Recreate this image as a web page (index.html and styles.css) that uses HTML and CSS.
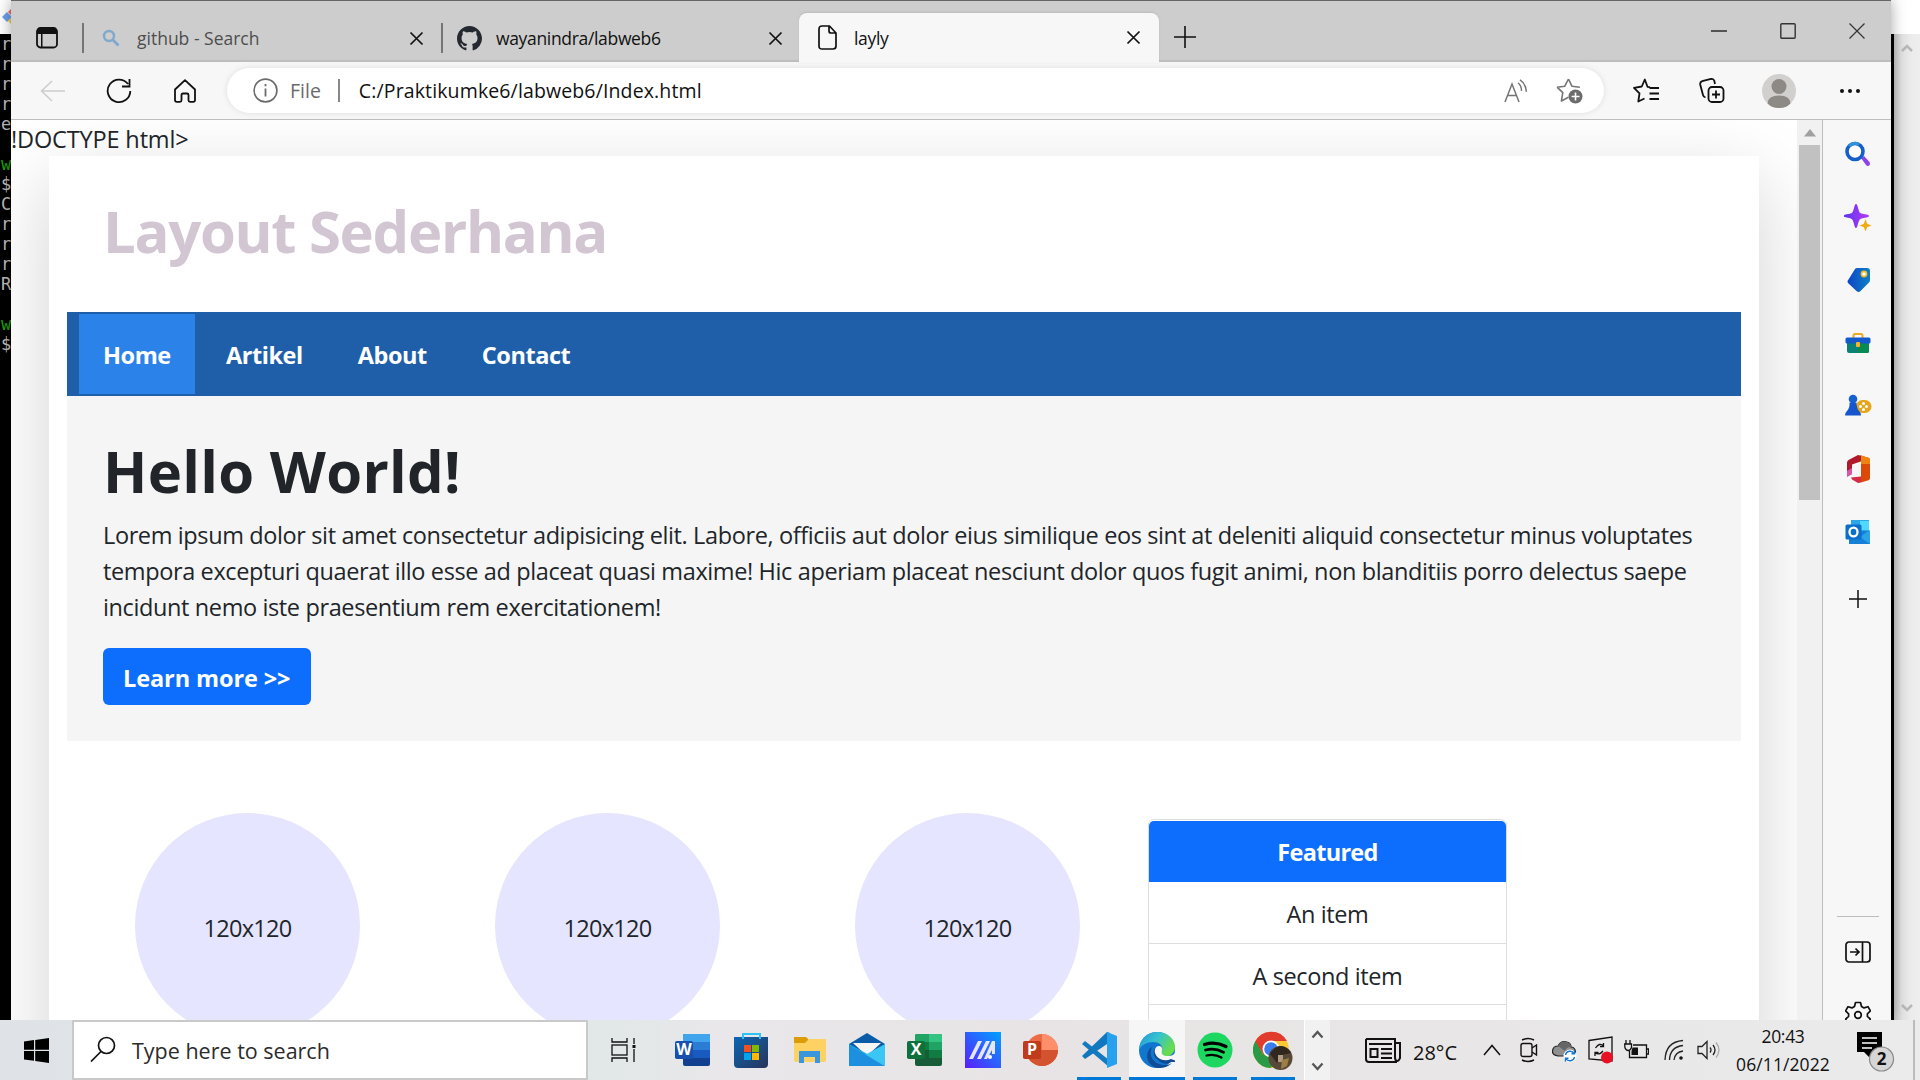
FILE: index.html
```html
<!DOCTYPE html>
<html lang="en">
<head>
<meta charset="utf-8">
<title>layly</title>
<link rel="stylesheet" href="styles.css">
</head>
<body>
<div class="desktop">

  <div class="terminal">
    <div class="term-title">
      <svg width="18" height="18" viewBox="0 0 18 18"><path d="M1 9l5-5 5 5-5 5z" fill="#6ea0ec"/><path d="M7 4l4-4 5 5-4 4z" fill="#ee6a6a"/><path d="M7 13l4-4 5 5-4 4z" fill="#f5cf50"/></svg>
    </div>
    <div class="term-body">
      <pre class="term-text">r
r
r
r
e

<b>w</b>
$
C
r
r
r
R

<b>w</b>
$</pre>
      <div class="term-scroll">
        <svg width="14" height="12" viewBox="0 0 14 12"><path d="M2 9l5-5 5 5" fill="none" stroke="#b8b8b8" stroke-width="2.6"/></svg>
        <svg width="14" height="12" viewBox="0 0 14 12"><path d="M2 3l5 5 5-5" fill="none" stroke="#b8b8b8" stroke-width="2.6"/></svg>
      </div>
    </div>
  </div>

  <div class="browser">
    <div class="titlebar">
      <div class="tab-actions">
        <svg width="22" height="22" viewBox="0 0 22 22"><rect x="1" y="1" width="20" height="19.500" rx="3.500" fill="none" stroke="#111" stroke-width="1.800"/><path d="M1 7V4.500Q1 1 4.500 1h13Q21 1 21 4.500V7zM5 7h1.500v13H5z" fill="#111"/></svg>
      </div>
      <div class="tab">
        <svg width="18" height="18" viewBox="0 0 18 18" fill="none" stroke="#7fa8cc" stroke-width="2.400"><circle cx="7" cy="7" r="5"/><path d="M10.500 10.500l6 6" stroke-width="2.800"/></svg>
        <span class="tab-name muted">github - Search</span>
        <svg class="close" width="15" height="15" viewBox="0 0 15 15"><path d="M1.500 1.500l12 12M13.500 1.500l-12 12" stroke="#111" stroke-width="1.700"/></svg>
      </div>
      <div class="tab tab-github">
        <svg width="25" height="25" viewBox="0 0 16 16"><path fill="#24292f" d="M8 0C3.580 0 0 3.580 0 8c0 3.540 2.290 6.530 5.470 7.590.4.070.55-.17.55-.38 0-.19-.01-.82-.01-1.490-2.010.37-2.530-.49-2.690-.94-.09-.23-.48-.94-.82-1.130-.28-.15-.68-.52-.01-.53.63-.01 1.080.58 1.230.82.72 1.210 1.870.87 2.330.66.07-.52.28-.87.51-1.070-1.780-.2-3.640-.89-3.640-3.950 0-.87.31-1.590.82-2.150-.08-.2-.36-1.020.08-2.120 0 0 .67-.21 2.200.82a7.600 7.600 0 0 1 4 0c1.530-1.040 2.200-.82 2.200-.82.44 1.100.16 1.920.08 2.120.51.56.82 1.270.82 2.150 0 3.070-1.870 3.750-3.650 3.950.29.25.54.73.54 1.480 0 1.070-.01 1.930-.01 2.200 0 .21.150.46.550.38A8 8 0 0 0 16 8c0-4.420-3.580-8-8-8z"/></svg>
        <span class="tab-name">wayanindra/labweb6</span>
        <svg class="close" width="15" height="15" viewBox="0 0 15 15"><path d="M1.500 1.500l12 12M13.500 1.500l-12 12" stroke="#111" stroke-width="1.700"/></svg>
      </div>
      <div class="tab tab-active">
        <svg width="19" height="25" viewBox="0 0 19 25" fill="none" stroke="#111" stroke-width="1.700"><path d="M4 1h7.500L18 8v13q0 3-3 3H4q-3 0-3-3V4q0-3 3-3zM11 1v5q0 2 2 2h5"/></svg>
        <span class="tab-name">layly</span>
        <svg class="close" width="15" height="15" viewBox="0 0 15 15"><path d="M1.500 1.500l12 12M13.500 1.500l-12 12" stroke="#111" stroke-width="1.700"/></svg>
      </div>
      <svg class="new-tab" width="22" height="22" viewBox="0 0 22 22"><path d="M11 0v22M0 11h22" stroke="#111" stroke-width="1.600"/></svg>
      <div class="win-controls">
        <svg width="16" height="16" viewBox="0 0 16 16"><path d="M0 8h16" stroke="#111" stroke-width="1.300"/></svg>
        <svg width="16" height="16" viewBox="0 0 16 16"><rect x=".8" y=".8" width="14.400" height="14.400" rx="1" fill="none" stroke="#333" stroke-width="1.400"/></svg>
        <svg width="16" height="16" viewBox="0 0 16 16"><path d="M.5 .5l15 15M15.500 .5l-15 15" stroke="#333" stroke-width="1.200"/></svg>
      </div>
    </div>

    <div class="toolbar">
      <svg class="ic-back" width="25" height="22" viewBox="0 0 25 22"><path d="M25 11H1.500M12 1L1.500 11 12 21" fill="none" stroke="#cdcdcd" stroke-width="1.600"/></svg>
      <svg class="ic-reload" width="26" height="26" viewBox="0 0 26 26"><path d="M22 6A11.300 11.300 0 1 0 24.300 13M23.500 1v7.500H16" fill="none" stroke="#111" stroke-width="1.800"/></svg>
      <svg class="ic-home" width="24" height="24" viewBox="0 0 24 24"><path d="M2 10.500L12 1.200l10 9.300V21q0 1.800-1.800 1.800H17q-1.500 0-1.500-1.500V16q0-1.500-1.500-1.500h-4q-1.500 0-1.500 1.500v5.300q0 1.500-1.500 1.500H3.800Q2 22.800 2 21z" fill="none" stroke="#111" stroke-width="1.800" stroke-linejoin="round"/></svg>
      <div class="address">
        <svg class="ic-info" width="25" height="25" viewBox="0 0 25 25"><circle cx="12.500" cy="12.500" r="11.400" fill="none" stroke="#6b6b6b" stroke-width="1.600"/><path d="M12.500 10.500v8M12.500 6v2.200" stroke="#6b6b6b" stroke-width="1.800"/></svg>
        <span class="scheme">File</span>
        <span class="sep"></span>
        <span class="url">C:/Praktikumke6/labweb6/Index.html</span>
        <svg class="ic-read" width="24" height="24" viewBox="0 0 24 24" fill="none" stroke="#757575" stroke-width="1.500"><path d="M1 23L8 5l7 18M3.500 16.500h9M14 4q3.500 2.500 3.500 8M16 .8q6 4 6.300 12"/></svg>
        <svg class="ic-star" width="27" height="27" viewBox="0 0 27 27"><path d="M12.500 2l3.400 7.200 8 1M1 10.200l7.800-1L12.500 2M1 10.200l5.800 5.500L5.400 24l7-3.800" fill="none" stroke="#757575" stroke-width="1.600" stroke-linejoin="round"/><circle cx="19.500" cy="19.500" r="7" fill="#6b6b6b"/><path d="M19.500 15.500v8M15.500 19.500h8" stroke="#fff" stroke-width="1.600"/></svg>
      </div>
      <div class="tools">
        <svg width="26" height="25" viewBox="0 0 26 25" fill="none" stroke="#111" stroke-width="1.800" stroke-linejoin="round"><path d="M17 9.200L14.500 8.800 11.800 1.500 8.800 8.500 1 9.800l5.500 5.600L5.300 23.500l6.200-3M16.500 10H26M16.500 15.500H26M16.500 21H26"/></svg>
        <svg width="26" height="26" viewBox="0 0 26 26" fill="none" stroke="#111" stroke-width="1.800"><rect x="9.500" y="9" width="15" height="15" rx="3.500"/><path d="M17 12.500v8M13 16.500h8M6.500 19.500Q4.500 19 4 17L1.200 6.500Q.8 4 3.200 3.200L12 1q2.500-.5 3.300 1.800L16 6"/></svg>
        <svg width="34" height="34" viewBox="0 0 34 34"><circle cx="17" cy="17" r="17" fill="#d2d0ce"/><circle cx="17" cy="12.500" r="7.500" fill="#8d8985"/><path d="M5.500 29.400Q6 21.500 17 21.500t11.500 7.900Q24 34 17 34T5.500 29.400z" fill="#8d8985"/></svg>
        <svg width="20" height="6" viewBox="0 0 20 6" fill="#111"><circle cx="2" cy="3" r="2"/><circle cx="10" cy="3" r="2"/><circle cx="18" cy="3" r="2"/></svg>
      </div>
    </div>

    <div class="window-body">
      <main class="page">
        <div class="stray">!DOCTYPE html&gt;</div>
        <div class="container">
          <header><h1>Layout Sederhana</h1></header>
          <nav><a class="active">Home</a><a>Artikel</a><a>About</a><a>Contact</a></nav>
          <section class="hero">
            <h1>Hello World!</h1>
            <p>Lorem ipsum dolor sit amet consectetur adipisicing elit. Labore, officiis aut dolor eius similique eos sint at deleniti aliquid consectetur minus voluptates<br>tempora excepturi quaerat illo esse ad placeat quasi maxime! Hic aperiam placeat nesciunt dolor quos fugit animi, non blanditiis porro delectus saepe<br>incidunt nemo iste praesentium rem exercitationem!</p>
            <a class="btn">Learn more &gt;&gt;</a>
          </section>
          <section class="features">
            <div class="circle">120x120</div>
            <div class="circle">120x120</div>
            <div class="circle">120x120</div>
            <div class="card">
              <div class="card-header">Featured</div>
              <div class="card-item">An item</div>
              <div class="card-item">A second item</div>
            </div>
          </section>
        </div>
      </main>
      <div class="scrollbar">
        <svg width="12" height="8" viewBox="0 0 12 8"><path d="M0 7.500L6 0l6 7.500z" fill="#a0a0a0"/></svg>
        <div class="thumb"></div>
      </div>
      <aside class="sidebar">
        <svg width="28" height="28" viewBox="0 0 28 28"><path d="M17 18l3-2 5.500 6q1.500 3-1.500 4-1 .3-2-1z" fill="#8b44e8"/><circle cx="11" cy="11.500" r="8" fill="#fff" stroke="#1560c8" stroke-width="3.600"/><path d="M5 6a8 8 0 0 1 10-1.500" fill="none" stroke="#2f93dc" stroke-width="3"/></svg>
        <svg width="28" height="28" viewBox="0 0 28 28"><defs><linearGradient id="sp"><stop offset="0" stop-color="#5a35ee"/><stop offset="1" stop-color="#b83af5"/></linearGradient></defs><path d="M12 1c1.800 0 2.300 7 4 8.800S25 11 25 13s-7 1.400-9 3.200S13.800 25 12 25s-2-7-4-8.800S-.5 15-.5 13 6 11.600 8 9.800 10.200 1 12 1z" fill="url(#sp)"/><path d="M21.500 16l1.700 4.800 4.300 1.700-4.300 1.700-1.700 4.300-1.700-4.300-4.300-1.700 4.300-1.700z" fill="#efae16"/></svg>
        <svg width="28" height="28" viewBox="0 0 28 28"><defs><linearGradient id="tg"><stop offset="0" stop-color="#0a46c8"/><stop offset="1" stop-color="#0f80c4"/></linearGradient></defs><path d="M13 2h10q3 0 3 3v9q0 1.500-1 2.500l-8.500 8.500q-2 2-4 0l-8-7.500q-2-2 0-4L11 3q1-1 2-1z" fill="url(#tg)"/><circle cx="20" cy="8" r="2.600" fill="#fff" stroke="#f2bd2c" stroke-width="1.600"/></svg>
        <svg width="28" height="28" viewBox="0 0 28 28"><path d="M9.500 9V6.500q0-1.500 1.500-1.500h6q1.500 0 1.500 1.500V9" fill="none" stroke="#eeaa25" stroke-width="2"/><path d="M3 13h22v9q0 2-2 2H5q-2 0-2-2z" fill="#0b8273"/><path d="M14 13h11v9q0 2-2 2h-9z" fill="#098a52"/><rect x="1.500" y="8.500" width="25" height="6" rx="1.500" fill="#1459cc"/><rect x="12" y="13" width="4" height="5" rx="1" fill="#f4b52a"/></svg>
        <svg width="28" height="28" viewBox="0 0 28 28"><rect x="12" y="8" width="15.500" height="13" rx="6.500" fill="#e7a51c"/><circle cx="9" cy="7" r="4.300" fill="#1760cf"/><path d="M5.500 10.500h7q0 6 3 9 1.500 1 1.500 4H1q0-3 2-4.500 3-3 2.500-8.500z" fill="#1656cc"/><g fill="#fff"><circle cx="19.500" cy="11.500" r="1.500"/><circle cx="19.500" cy="17.500" r="1.500"/><circle cx="16.500" cy="14.500" r="1.500"/><circle cx="22.500" cy="14.500" r="1.500"/></g></svg>
        <svg width="28" height="28" viewBox="0 1 28 28"><path d="M14 1L18 2v5L8 10.500V20l-5 2.500V8.500Q3 7 4.500 6z" fill="#b01a2b"/><path d="M3 17l5-3v6l-5 3z" fill="#d656a8"/><path d="M14 1l3 .5 7.500 2.200Q26 4.200 26 6v18q0 1.800-1.500 2.300L17 28.500V2z" fill="#dc4a0a"/><path d="M17 1.500l7.500 2.200Q26 4.200 26 6v4h-9z" fill="#ee8512"/><path d="M7 23.500l10-1v6L14 29l-6-3.500z" fill="#d42c48"/></svg>
        <svg width="28" height="28" viewBox="0 0 28 28"><rect x="7" y="2" width="18" height="15" fill="#2ba7ea"/><path d="M16 3h9v9h-9z" fill="#50d9ff"/><path d="M5 13l21 0v13H5z" fill="#1580d6"/><path d="M16 19l10-7v14z" fill="#2ba3e8"/><rect x="1.500" y="6.500" width="16" height="15" rx="1.500" fill="#0a6ecb"/><ellipse cx="9.500" cy="14" rx="4" ry="4.400" fill="none" stroke="#fff" stroke-width="2.300"/></svg>
        <svg class="add" width="18" height="18" viewBox="0 0 18 18"><path d="M9 0v18M0 9h18" stroke="#111" stroke-width="1.500"/></svg>
        <hr>
        <svg class="panel" width="26" height="22" viewBox="0 0 26 22" fill="none" stroke="#111" stroke-width="1.700"><rect x="1" y="1" width="24" height="20" rx="3"/><path d="M17.500 1v20M5 11h9M10.500 7.500L14 11l-3.500 3.500"/></svg>
        <svg class="gear" width="26" height="26" viewBox="0 0 26 26" fill="none" stroke="#111" stroke-width="1.700" stroke-linejoin="round"><path d="M10.500 1.500h5l1 4 2.500 1.400 4-1.200 2.400 4.200-3 2.900v2.600l3 2.800-2.400 4.200-4-1.100-2.500 1.400-1 4h-5l-1-4L7 21.300l-4 1.100-2.400-4.200 3-2.800v-2.600l-3-2.900L3 5.700l4 1.200 2.500-1.400z"/><circle cx="13" cy="14" r="3.300"/></svg>
      </aside>
    </div>
  </div>

  <div class="taskbar">
    <div class="start"><svg width="25" height="25" viewBox="0 0 25 25"><path d="M0 3.500l10-1.400v9.700H0zM11.200 1.900L25 0v11.800H11.200zM0 13h10v9.800L0 21.400zM11.200 13H25v12l-13.800-2z"/></svg></div>
    <div class="search">
      <svg width="26" height="26" viewBox="0 0 26 26" fill="none" stroke="#111" stroke-width="1.700"><circle cx="16.500" cy="9.500" r="8"/><path d="M11 15.500L1 25.500"/></svg>
      <span>Type here to search</span>
    </div>
    <div class="task-view"><svg width="26" height="24" viewBox="0 0 26 24" fill="none" stroke="#111" stroke-width="1.300"><path d="M1 0v4h15V0M1 24v-4h15v4M23 0v6M23 11v13"/><rect x="1" y="7" width="15" height="10"/><path d="M21.500 7h3v3h-3z" fill="#111" stroke="none"/></svg></div>
    <div class="apps">
      <div class="app"><svg width="36" height="36" viewBox="0 0 36 36"><rect x="8" y="2" width="27" height="32" rx="2" fill="#123f8f"/><path d="M8 4q0-2 2-2h23q2 0 2 2v6H8z" fill="#41a5ee"/><path d="M8 10h27v8H8z" fill="#2b7cd3"/><path d="M8 18h27v8H8z" fill="#185abd"/><rect y="9" width="18" height="18" rx="1.800" fill="#1750ae"/><text x="9" y="23" class="letter">W</text></svg></div>
      <div class="app"><svg width="36" height="36" viewBox="0 0 36 36"><defs><linearGradient id="ms" x1="0" y1="0" x2="1" y2="1"><stop offset="0" stop-color="#0d66b4"/><stop offset="1" stop-color="#27355a"/></linearGradient></defs><path d="M1 5h34v27q0 4-4 4H5q-4 0-4-4z" fill="url(#ms)"/><path d="M10 7V2h17v5" fill="none" stroke="#2cc4f5" stroke-width="2"/><path d="M11 13h7v7h-7z" fill="#f25022"/><path d="M19 13h7v7h-7z" fill="#7fba00"/><path d="M11 21h7v7h-7z" fill="#00a4ef"/><path d="M19 21h7v7h-7z" fill="#ffb900"/></svg></div>
      <div class="app"><svg width="36" height="36" viewBox="0 0 36 36"><path d="M3 5h12l3 3v4H3z" fill="#dc9c05"/><path d="M3 11h11l4-4h17v21q0 2-2 2H5q-2 0-2-2z" fill="#fdd162"/><path d="M8 31V19h21v12h-5v-6H13v6z" fill="#3a96dd"/></svg></div>
      <div class="app"><svg width="36" height="36" viewBox="0 0 36 36"><path d="M0 12L18 1l18 11v8H0z" fill="#0a5ba8"/><path d="M4 11h28L18 24z" fill="#f5f5f5"/><path d="M0 12l22 12-8 10H0z" fill="#2aa6e4"/><path d="M36 12L16 23l20 11z" fill="#3cc6f4"/><path d="M0 34V13l36 21z" fill="#1c90de"/></svg></div>
      <div class="app"><svg width="36" height="36" viewBox="0 0 36 36"><rect x="8" y="2" width="27" height="32" rx="2" fill="#185c37"/><path d="M8 4q0-2 2-2h12v8H8z" fill="#21a366"/><path d="M22 2h11q2 0 2 2v6H22z" fill="#33c481"/><path d="M8 10h14v8H8z" fill="#107c41"/><path d="M22 10h13v8H22z" fill="#21a366"/><path d="M22 18h13v8H22z" fill="#107c41"/><rect y="9" width="18" height="18" rx="1.800" fill="#0f703b"/><text x="9" y="23" class="letter">X</text></svg></div>
      <div class="app"><svg width="36" height="36" viewBox="0 0 36 36"><defs><linearGradient id="as" x1="0" y1="1" x2="1" y2="0"><stop offset="0" stop-color="#5a1cff"/><stop offset="1" stop-color="#00a2ff"/></linearGradient></defs><path d="M0 0h36v36H0z" fill="url(#as)"/><path d="M4 27L13 9h4L8 27zM12 27l9-18h4l-9 18zM19 27l8-18h3v13h-3v-4l-5 9z" fill="#e6e6ff"/><circle cx="25" cy="25" r="2" fill="#fff"/></svg></div>
      <div class="app"><svg width="36" height="36" viewBox="0 0 36 36"><circle cx="19" cy="18" r="16" fill="#ed6c47"/><path d="M19 2a16 16 0 0 1 16 16H19z" fill="#ff8f6b"/><path d="M3 18h32a16 16 0 0 1-32 0z" fill="#d35230"/><rect y="9" width="18" height="18" rx="1.800" fill="#c03b1c"/><text x="9" y="23" class="letter">P</text></svg></div>
      <div class="app open"><svg width="36" height="36" viewBox="0 0 36 36"><path d="M1 12l3-3 24 19v7z" fill="#1479c0"/><path d="M1 24l25-24 3 1v9L4 27z" fill="#1177bf"/><path d="M26 0l10 4v28l-10 4z" fill="#27a0ee"/></svg></div>
      <div class="app open current"><svg width="36" height="36" viewBox="0 0 36 36"><defs><linearGradient id="eg" x1="0" y1="0" x2="1" y2=".5"><stop offset="0" stop-color="#2194dc"/><stop offset=".5" stop-color="#35c2cf"/><stop offset="1" stop-color="#69dc4c"/></linearGradient></defs><circle cx="18" cy="18" r="18" fill="#1176ce"/><path d="M0 18C1 6 9 0 18 0c12 0 18 8 18 15 0 6-5 10-10 9-5-1-5-3-3-6 1-5-3-8-9-8C8 10 2 13 0 18z" fill="url(#eg)"/><path d="M13 15c-4 9 2 18 13 18 3 0 5-1 7-2-4 4-8 5-14 5C7 34 5 20 13 15z" fill="#104c96"/><path d="M20 14c-3 2-4 5-3 8 2 5 9 7 16 3l3 0v5l-4 0c-3 3-10 2-13-2-6-4-6-12 1-14z" fill="#104c96"/><path d="M20 14c5 0 2 6 3 8s7 3 11 1l3-3v9l-5-2c-7 3-14 0-16-6-1-4 1-7 4-7z" fill="#f6f6f6"/></svg></div>
      <div class="app open"><svg width="36" height="36" viewBox="0 0 36 36"><circle cx="18" cy="18" r="17.500" fill="#1ed760"/><g fill="none" stroke="#000" stroke-linecap="round"><path d="M7.500 12.500q11-3.500 21.500 2" stroke-width="3.300"/><path d="M8.500 18q9.500-2.500 18 2.200" stroke-width="2.800"/><path d="M9.500 23.500q8-2 15 2" stroke-width="2.300"/></g></svg></div>
      <div class="app open"><svg width="40" height="40" viewBox="0 0 40 40"><circle cx="18" cy="20" r="18" fill="#fcc934"/><path d="M2 12a18 18 0 0 1 32-1H18l-7 14z" fill="#e13b2d"/><path d="M2.400 11A18 18 0 0 0 18 38l7-14-7 4-8-4z" fill="#2b9a47"/><circle cx="18" cy="19" r="8.500" fill="#fff"/><circle cx="18" cy="19" r="6.800" fill="#3b7ded"/><circle cx="27.500" cy="28" r="12" fill="#574838"/><path d="M17 24q8-13 18-5l3 4-9 2-5 8z" fill="#30281f"/><path d="M25 25h5v7h-5z" fill="#b09a80"/><path d="M29 30l7-2-2 8-6 3z" fill="#9c7f42"/></svg></div>
    </div>
    <div class="band-scroll">
      <svg width="13" height="10" viewBox="0 0 13 10"><path d="M1.500 8.500l5-5.500 5 5.500" fill="none" stroke="#555" stroke-width="2.300"/></svg>
      <svg width="13" height="10" viewBox="0 0 13 10"><path d="M1.500 1.500l5 5.500 5-5.500" fill="none" stroke="#555" stroke-width="2.300"/></svg>
    </div>
    <div class="tray">
      <svg class="t-news" width="36" height="25" viewBox="0 0 36 25" fill="none" stroke="#111" stroke-width="2"><path d="M1 1h29v18q0 4 2 4t3-3V5h-5M1 1v20q0 3 3 3h28"/><path d="M4 6h23M16 11h11M16 15.500h11M16 20h11" stroke-width="1.800"/><rect x="5.500" y="11" width="7" height="8"/></svg>
      <span class="t-temp">28°C</span>
      <svg class="t-up" width="18" height="12" viewBox="0 0 18 12"><path d="M1 11l8-9.500 8 9.500" fill="none" stroke="#111" stroke-width="1.500"/></svg>
      <svg class="t-meet" width="18" height="26" viewBox="0 0 18 26" fill="none" stroke="#111" stroke-width="1.400"><rect x="1" y="6.500" width="11" height="13" rx="2"/><path d="M12 11l4.500-3v10L12 15M2 3q6-3 12 0M2 23q6 3 12 0"/></svg>
      <svg class="t-cloud" width="25" height="26" viewBox="0 0 25 26"><path d="M6 19q-6-1-5.500-5Q1 9 6 9q3-6 9-4 4 1 4 5 4 0 4.500 5-1 4-5 4z" fill="#909090" stroke="#222" stroke-width="1.200"/><path d="M6 9q3-6 9-4 4 1 4 5-5 0-6 4z" fill="#666"/><circle cx="18" cy="19" r="6.500" fill="#fff"/><path d="M13.500 18a4.600 4.600 0 0 1 8.500-1.500M22.500 20a4.600 4.600 0 0 1-8.500 1.500M22.500 13.500v3.200h-3M13.500 24.500v-3.200h3" fill="none" stroke="#0f77cf" stroke-width="1.400"/></svg>
      <svg class="t-update" width="26" height="28" viewBox="0 0 26 28" fill="none" stroke="#111" stroke-width="1.300"><path d="M1 4.500L24 1v24L1 23z"/><path d="M7.500 12q4-6 8-2M15.500 7v3.500H12M15 15q-4 5-8 1.500M7 20v-3.500h3.500"/><circle cx="19" cy="21.500" r="6" fill="#e81123" stroke="none"/></svg>
      <svg class="t-battery" width="25" height="20" viewBox="0 0 25 20" fill="none" stroke="#111" stroke-width="1.300"><path d="M9 5h13.500v12.500H5.500V11M23 9h1.500v5H23M2 0v4M6 0v4M.7 4h6.800v3.500q-1 3-3.300 3t-3.300-3z"/><path d="M8.500 7.500H14V15H7.500v-4z" fill="#111" stroke="none"/></svg>
      <svg class="t-wifi" width="20" height="22" viewBox="0 0 20 22" fill="none" stroke="#222" stroke-width="1.300"><path d="M1 21Q1.500 3 19 1.500M5.500 21Q6 8 19 6.500M10 21q1-8 9-9"/><circle cx="17" cy="19" r="1.800" fill="#111" stroke="none"/></svg>
      <svg class="t-sound" width="24" height="20" viewBox="0 0 24 20" fill="none" stroke="#222" stroke-width="1.300"><path d="M1 6.500h4L10 1.500v17L5 13.500H1zM13 7.500q2 2.500 0 5M16 5q4 5 0 10"/><path d="M19 2.500q6 7.500 0 15" stroke="#aaa"/></svg>
      <div class="clock"><span class="time">20:43</span><span class="date">06/11/2022</span></div>
      <div class="notify">
        <svg width="38" height="44" viewBox="0 0 38 44"><path d="M0 1h25v20H14v7l-7-7H0z" fill="#000"/><path d="M5 7h15M5 12h15M5 17h10" stroke="#fff" stroke-width="1.700"/><circle cx="24.500" cy="28" r="12" fill="#d6d6d6" stroke="#8a8a8a" stroke-width="1.200"/><text x="24.500" y="34" class="badge">2</text></svg>
      </div>
      <div class="peek"></div>
    </div>
  </div>
</div>
</body>
</html>
```

FILE: styles.css
```css
* { box-sizing: border-box; }

body {
  margin: 0;
  font-family: "Open Sans", "Noto Sans", sans-serif;
  color: #212529;
}

svg { display: block; flex: none; }

.desktop {
  position: relative;
  width: 1920px;
  height: 1080px;
  overflow: hidden;
  background: #000;
}

/* Terminal behind the browser */
.terminal {
  position: absolute;
  inset: 0 0 60px 0;
  display: flex;
  flex-direction: column;
}
.term-title {
  height: 34px;
  padding: 8px 0 0 1px;
  background: #fff;
}
.term-body {
  flex: 1;
  display: flex;
  justify-content: space-between;
  background: #000;
}
.term-text {
  margin: 0 0 0 1px;
  font: 17px/20px "DejaVu Sans Mono", monospace;
  color: #bfbfbf;
}
.term-text b { font-weight: 400; color: #1ca800; }
.term-scroll {
  width: 26px;
  display: flex;
  flex-direction: column;
  justify-content: space-between;
  align-items: center;
  padding: 8px 0 6px;
  background: linear-gradient(90deg, #c8c8c8, #e2e2e2 8px, #ececec 18px, #eee);
}

/* Browser window */
.browser {
  position: absolute;
  left: 11px;
  top: 0;
  width: 1880px;
  height: 1020px;
  display: flex;
  flex-direction: column;
  background: #f7f7f7;
  box-shadow: 0 0 14px rgba(0, 0, 0, .35);
}
.titlebar {
  height: 62px;
  flex: none;
  display: flex;
  align-items: flex-start;
  background: #cdcdcd;
  border-top: 1px solid #666;
  box-shadow: inset 0 -2px 1px #bdbdbd;
}
.tab-actions { width: 71px; padding: 26px 0 0 25px; }
.tab {
  width: 359px;
  height: 30px;
  margin-top: 22px;
  padding: 0 17px 0 18px;
  display: flex;
  align-items: center;
  gap: 17px;
  border-left: 2px solid #757575;
  font-size: 17.500px;
}
.tab-github { width: 358px; padding: 0 16px 0 14px; gap: 14px; }
.tab-active {
  width: 360px;
  height: 50px;
  margin-top: 12px;
  padding: 0 18px 1px 19px;
  gap: 17px;
  border: 0;
  border-radius: 8px 8px 0 0;
  background: #f7f7f7;
  box-shadow: 0 -1px 2px #bbb;
}
.tab-name { letter-spacing: -.33px; color: #111; }
.tab-name.muted { letter-spacing: 0; color: #4d4d4d; }
.close { margin-left: auto; }
.new-tab { margin: 25px 0 0 15px; }
.win-controls {
  display: flex;
  gap: 53px;
  margin: 22px 26px 0 auto;
}

.toolbar {
  height: 58px;
  flex: none;
  display: flex;
  align-items: center;
  border-bottom: 1px solid #bdbdbd;
}
.ic-back { margin-left: 29px; }
.ic-reload { margin-left: 41px; }
.ic-home { margin-left: 41px; }
.address {
  width: 1377px;
  height: 45px;
  margin-left: 30px;
  padding: 0 21px 0 26px;
  display: flex;
  align-items: center;
  border-radius: 23px;
  background: #fff;
  box-shadow: 0 0 6px rgba(0, 0, 0, .1);
  font-size: 19.500px;
}
.scheme { margin-left: 12px; color: #6b6b6b; }
.sep { width: 2px; height: 23px; margin-left: 17px; background: #888; }
.url { margin-left: 19px; letter-spacing: .13px; color: #111; }
.ic-read { margin-left: auto; }
.ic-star { margin-left: 28px; }
.tools {
  flex: 1;
  display: flex;
  align-items: center;
  justify-content: space-between;
  padding: 0 31px 0 29px;
}
.tools svg:nth-child(3) { margin: 0 4px 0 -2px; }

.window-body { flex: 1; min-height: 0; display: flex; }

/* Page shown in the viewport */
.page {
  width: 1786px;
  overflow: hidden;
  background: #fff;
  font-size: 23.500px;
  line-height: 36px;
  letter-spacing: -.38px;
}
.stray { height: 36px; padding-top: 1px; letter-spacing: -.15px; }
.container {
  width: 1710px;
  height: 1200px;
  margin-left: 38px;
  padding: 0 18px;
  background: #fff;
  box-shadow: 0 24px 72px rgba(0, 0, 0, .175);
}
.page h1 {
  margin: 0;
  font-size: 58px;
  line-height: 72px;
  font-weight: 700;
}
header { height: 156px; padding: 39px 36px 0; }
header h1 { color: #d3c6d3; letter-spacing: -1.300px; }
nav {
  height: 84px;
  padding: 2px 12px;
  display: flex;
  gap: 7px;
  background: #1f5faa;
  color: #fff;
  font-weight: 700;
  letter-spacing: -.45px;
}
nav a { padding: 23px 24px 21px; }
nav .active { width: 116px; background: #2b83ea; }
.hero {
  height: 345px;
  padding: 39px 36px 0;
  background: #f5f5f5;
}
.hero h1 { letter-spacing: .3px; }
.hero p { margin: 10px 0 23px; white-space: nowrap; }
.btn {
  display: block;
  width: 208px;
  height: 57px;
  padding: 12px 0 0 20px;
  border-radius: 6px;
  background: #0d6efd;
  color: #fff;
  font-weight: 700;
  letter-spacing: -.1px;
}
.features { display: flex; padding: 72px 0 0 68px; }
.circle {
  width: 225px;
  height: 225px;
  margin-right: 135px;
  padding-top: 1px;
  border-radius: 50%;
  background: #e5e5ff;
  line-height: 228px;
  text-align: center;
  letter-spacing: -.7px;
}
.card {
  width: 359px;
  height: 310px;
  margin: 6px 0 0 -67px;
  border: 1px solid #dedede;
  border-radius: 6px;
  text-align: center;
}
.card-header {
  height: 61px;
  margin-top: 1px;
  padding-top: 13px;
  border-radius: 5px 5px 0 0;
  background: #0d6efd;
  color: #fff;
  font-weight: 700;
  letter-spacing: -.7px;
}
.card-item {
  height: 61.500px;
  padding-top: 14px;
  border-bottom: 1.500px solid #dedede;
}

.scrollbar {
  width: 25px;
  padding-top: 9px;
  display: flex;
  flex-direction: column;
  align-items: center;
  background: #f1f1f1;
}
.thumb { width: 21px; height: 355px; margin-top: 8px; background: #c1c1c1; }

.sidebar {
  flex: 1;
  overflow: hidden;
  display: flex;
  flex-direction: column;
  align-items: center;
  gap: 35px;
  padding: 20px 0 0 1px;
  border-left: 1px solid #bdbdbd;
}
.sidebar .add { margin-top: 9px; }
.sidebar hr {
  width: 42px;
  height: 1px;
  margin: 273px 0 -11px;
  border: 0;
  background: #bdbdbd;
  flex: none;
}
.sidebar .gear { margin-top: 3px; }

/* Taskbar */
.taskbar {
  position: absolute;
  left: 0;
  right: 0;
  bottom: 0;
  height: 60px;
  display: flex;
  background: linear-gradient(90deg, #dfe3e8 0, #e2e8e7 620px, #e9e7ea 720px, #e8e4e5 1050px, #e8e6e6 1450px, #ebebeb 1920px);
}
.start { width: 72px; padding: 18px 0 0 24px; }
.search {
  width: 516px;
  padding: 1px 0 0 16px;
  display: flex;
  align-items: center;
  gap: 16px;
  border: 2px solid #c9c9c9;
  background: #fff;
  font-size: 21.500px;
  color: #2b2b2b;
}
.search svg { margin-top: -3px; }
.task-view { width: 76px; padding: 18px 0 0 23px; }
.apps { display: flex; }
.app {
  width: 58px;
  display: flex;
  justify-content: center;
  align-items: center;
  border-bottom: 3px solid transparent;
  padding-top: 3px;
}
.app.open {
  width: 44px;
  margin: 0 7px;
  border-bottom-color: #0078d7;
}
.app.current { width: 56px; margin: 0 1px; background: #f6f6f6; }
.letter, .badge {
  font: 700 16px "Open Sans", sans-serif;
  text-anchor: middle;
  fill: #fff;
}
.badge { font-size: 17px; fill: #111; }
.band-scroll {
  width: 26px;
  display: flex;
  flex-direction: column;
  justify-content: space-between;
  align-items: center;
  padding: 9px 0 8px;
  margin-left: 2px;
  background: #f1f1f1;
  border-left: 1px solid #fff;
}
.tray { flex: 1; display: flex; align-items: center; color: #111; }
.t-news { margin-left: 35px; }
.t-temp { width: 46px; margin: 4px 0 0 12px; font-size: 20px; }
.t-up { margin-left: 24px; }
.t-meet { margin-left: 19px; }
.t-cloud { margin-left: 14px; }
.t-update { margin-left: 11px; }
.t-battery { margin-left: 10px; }
.t-wifi { margin-left: 15px; }
.t-sound { margin-left: 13px; }
.clock {
  width: 96px;
  margin-left: 14px;
  display: flex;
  flex-direction: column;
  align-items: center;
  font-size: 17.500px;
  line-height: 28px;
}
.time { letter-spacing: -.3px; }
.date { letter-spacing: .1px; }
.notify { margin: 5px 0 0 26px; }
.peek { width: 2px; height: 60px; margin-left: 18px; background: #bbb; }
```
